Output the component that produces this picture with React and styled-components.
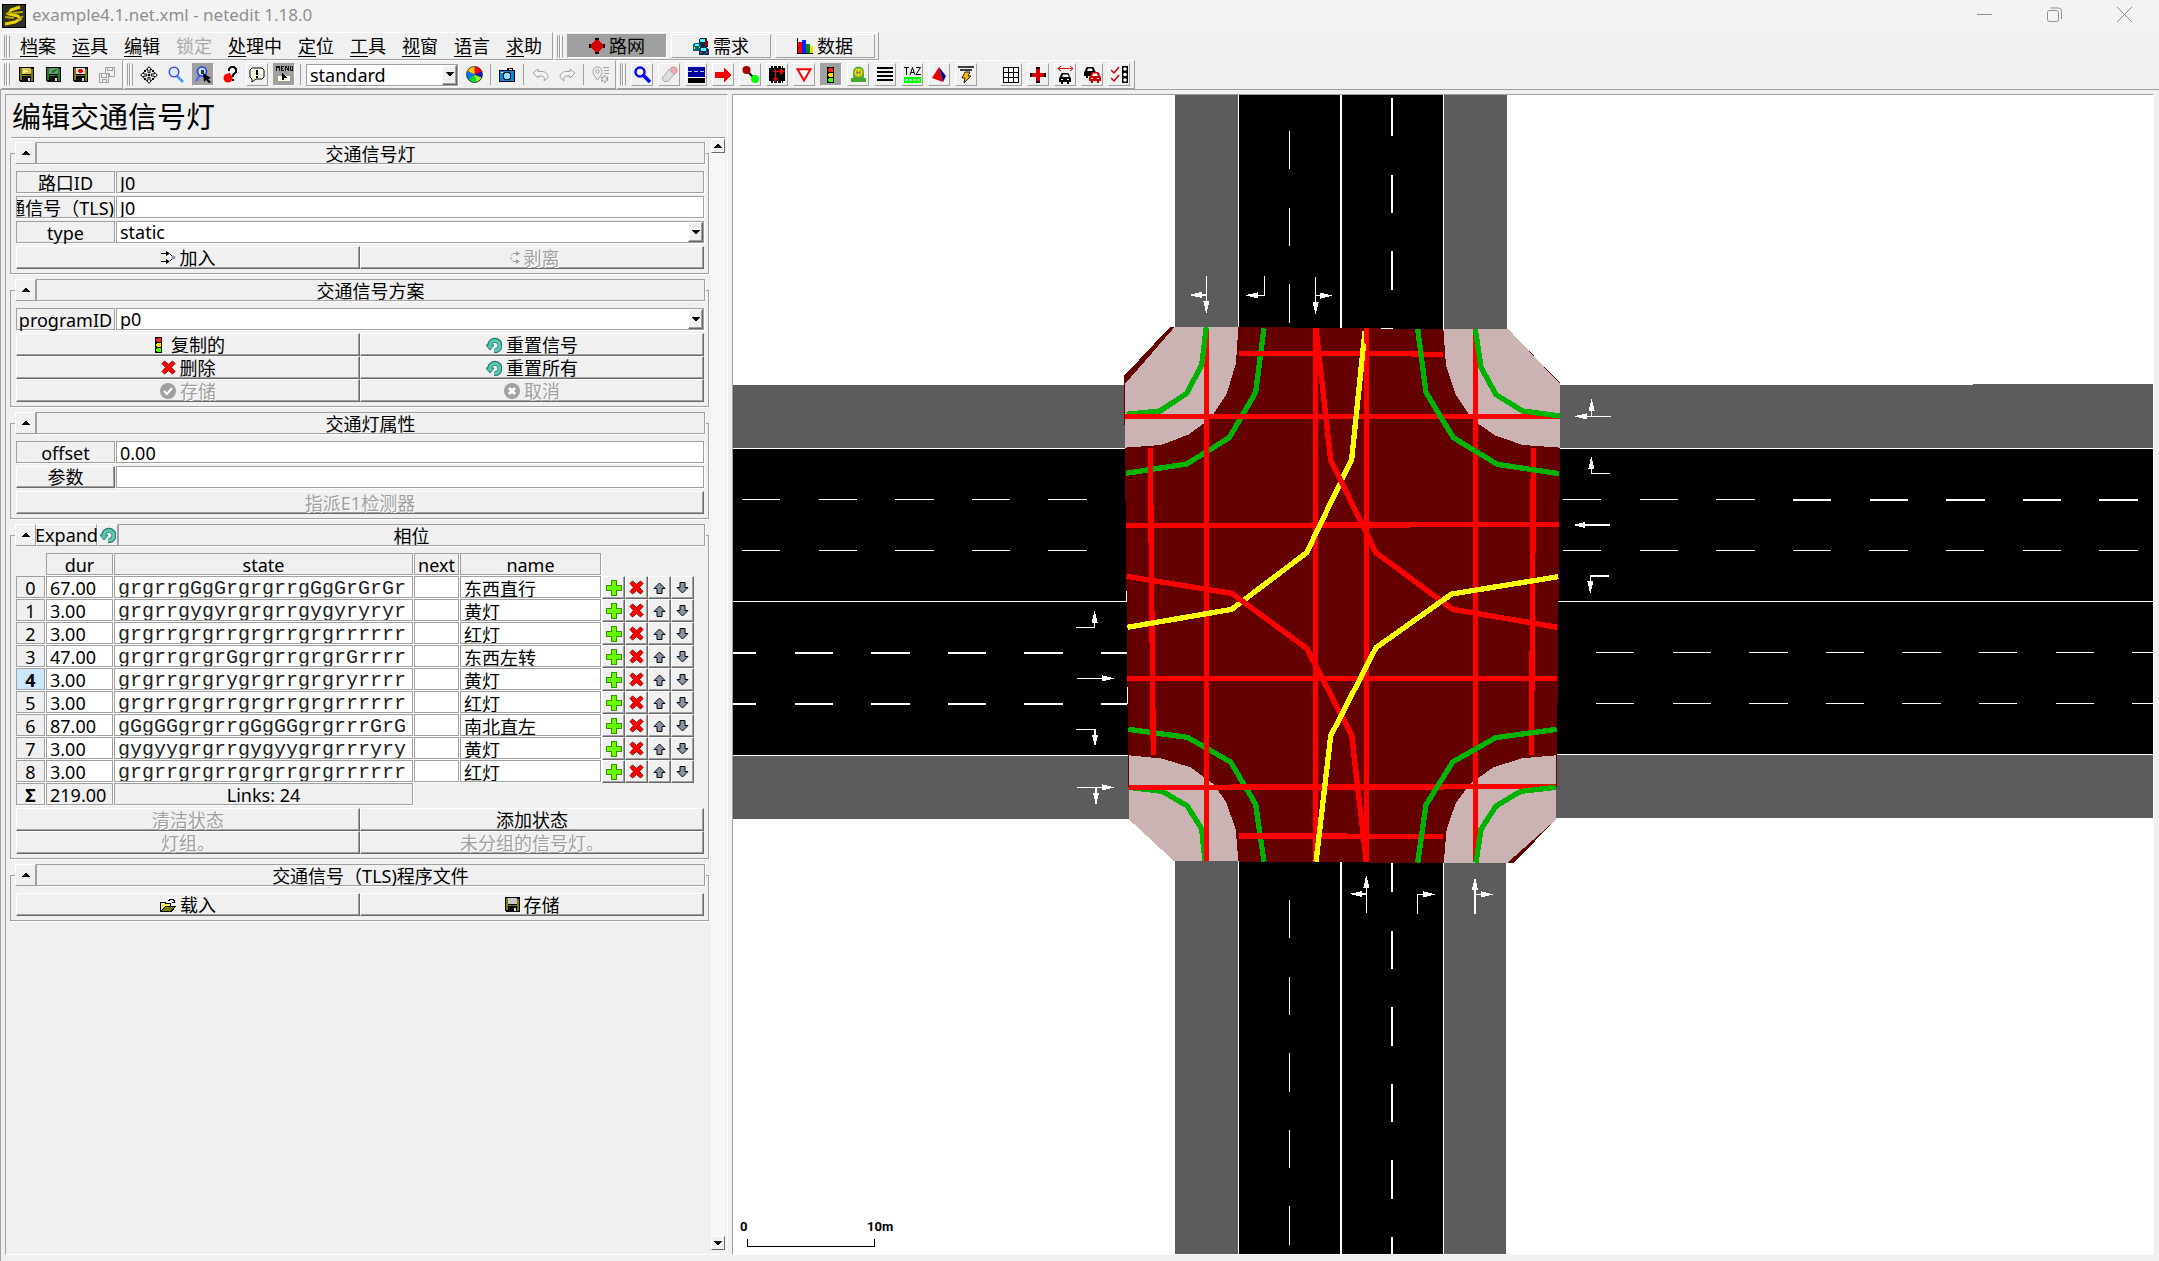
import React from "react";
import styled, { createGlobalStyle, css } from "styled-components";

const face = "#f0f0f0";
const shade = "#a0a0a0";
const dark = "#696969";

const Global = createGlobalStyle`
  *, *::before, *::after { box-sizing: border-box; }
  body { margin: 0; background: ${face}; }
  body, button, input, select {
    font-family: "Noto Sans", "Noto Sans CJK SC", sans-serif;
    font-size: 18px;
    color: #000;
  }
  button, input, select { margin: 0; padding: 0; border: 0; border-radius: 0; background: none; outline: none; }
`;

/* ---------- window frame ---------- */

const Window = styled.div`
  display: flex;
  flex-direction: column;
  height: 100vh;
  background: ${face};
  overflow: hidden;
`;

const TitleBar = styled.header`
  display: flex;
  align-items: center;
  flex: none;
  height: 32px;
  padding-left: 2px;
  gap: 6px;
  background: #f3f3f3;
`;

const Title = styled.h1`
  flex: 1;
  margin: 0;
  padding-bottom: 2px;
  font-size: 17px;
  line-height: 24px;
  font-weight: 400;
  color: #8e8e8e;
`;

const WindowButtons = styled.div`
  display: flex;
  align-self: flex-start;
`;

const WindowButton = styled.button`
  display: grid;
  place-items: center;
  width: 70px;
  height: 28px;
`;

const BarRow = styled.div`
  display: flex;
  flex: none;
  gap: 1px;
  padding-left: 1px;
  height: ${(p) => p.$height}px;
`;

const Bar = styled.div`
  display: flex;
  align-items: center;
  gap: ${(p) => p.$gap}px;
  padding: 0 ${(p) => p.$end}px 0 2px;
  border: 1px solid;
  border-color: #fff ${shade} ${shade} #fff;
`;

const Grip = styled.span`
  width: 6px;
  height: 23px;
  border: 1px solid;
  border-color: #fff ${shade};
  border-top-color: transparent;
  border-bottom-color: transparent;
  background: linear-gradient(90deg, ${face} 1px, ${shade} 1px, ${shade} 2px, #fff 2px, #fff 3px, ${face} 3px);
`;

const Menus = styled.nav`
  display: flex;
`;

const MenuItem = styled.button`
  padding: 0 8px;
  height: 26px;
  line-height: 26px;
  white-space: nowrap;
  color: ${(p) => (p.disabled ? "#a8a8a8" : "#000")};
  u {
    text-underline-offset: 3px;
    text-decoration-thickness: 1px;
    text-decoration-line: ${(p) => (p.disabled ? "none" : "underline")};
  }
`;

const raised = css`border-color: #fff ${shade} ${shade} #fff;`;
const pressed = css`border-color: ${shade} #fff #fff ${shade}; background: ${shade};`;

const ModeButton = styled.button`
  display: flex;
  align-items: center;
  justify-content: center;
  gap: 4px;
  width: 100px;
  height: 24px;
  line-height: 22px;
  border: 1px solid;
  ${(p) => (p.$on ? pressed : raised)}
`;

const Tool = styled.button`
  display: grid;
  place-items: center;
  width: 22px;
  height: 23px;
  border: 1px solid transparent;
  ${(p) => p.$look === "raised" && raised}
  ${(p) => p.$look === "pressed" && pressed}
`;

const Divider = styled.span`
  width: 1px;
  height: 21px;
  background: ${shade};
`;

const Spacer = styled.span`
  width: 13px;
`;

/* ---------- form parts ---------- */

const boxed = css`
  height: 22px;
  border: 1px solid ${shade};
  box-shadow: 1px 1px 0 #fff;
`;

const SelectBox = styled.div`
  display: grid;
  flex: ${(p) => (p.$width ? "none" : 1)};
  width: ${(p) => (p.$width ? p.$width + "px" : "auto")};
  ${boxed}
  background: #fff;
  select, span { grid-area: 1 / 1; }
  select {
    appearance: none;
    width: 100%;
    height: 20px;
    padding: 0 18px 0 3px;
    line-height: 20px;
  }
  span {
    justify-self: end;
    display: grid;
    place-items: center;
    width: 15px;
    height: 20px;
    background: ${face};
    border: 1px solid;
    border-color: #fff ${dark} ${dark} #fff;
    box-shadow: inset -1px -1px 0 ${shade};
    pointer-events: none;
  }
`;

const Line = styled.div`
  display: flex;
  gap: 1px;
  height: 25px;
`;

const Caption = styled.label`
  display: flex;
  flex: none;
  justify-content: ${(p) => (p.$clip ? "flex-end" : "center")};
  width: 99px;
  ${boxed}
  line-height: 22px;
  white-space: nowrap;
  overflow: ${(p) => (p.$clip ? "hidden" : "visible")};
`;

const Field = styled.input`
  flex: 1;
  min-width: 0;
  width: ${(p) => (p.$cell ? "calc(100% - 1px)" : "auto")};
  ${boxed}
  display: block;
  padding: 2px 3px 0;
  line-height: 20px;
  background: ${(p) => (p.readOnly ? face : "#fff")};
  ${(p) => p.$mono && css`
    font-family: "Liberation Mono", monospace;
    font-size: 20px;
    color: #222;
  `}
`;

const Push = styled.button`
  display: flex;
  align-items: center;
  justify-content: center;
  gap: 4px;
  flex: ${(p) => (p.$width ? "none" : "1 1 0")};
  width: ${(p) => (p.$width ? p.$width + "px" : "auto")};
  height: ${(p) => (p.$low ? 22 : 23)}px;
  line-height: 22px;
  border: 1px solid;
  border-color: #fff ${dark} ${dark} #fff;
  box-shadow: inset -1px -1px 0 ${shade};
  color: ${(p) => (p.disabled ? shade : "#000")};
  text-shadow: ${(p) => (p.disabled ? "1px 1px 0 #fff" : "none")};
`;

const PushRow = styled.div`
  display: flex;
`;

/* ---------- side panel ---------- */

const Workspace = styled.main`
  display: flex;
  flex: 1;
  min-height: 0;
  gap: 4px;
  padding: 4px 5px 6px 4px;
  border-top: 1px solid ${shade};
  border-left: 1px solid ${shade};
`;

const Panel = styled.section`
  display: flex;
  flex-direction: column;
  flex: none;
  width: 723px;
  border: 1px solid;
  border-color: ${shade} #fff #fff ${shade};
`;

const PanelTitle = styled.h2`
  margin: 0 2px 0 5px;
  height: 43px;
  padding: 2px 1px 0;
  border-bottom: 1px solid ${shade};
  box-shadow: 0 1px 0 #fff;
  font-size: 29px;
  line-height: 40px;
  font-weight: 400;
`;

const PanelBody = styled.div`
  display: flex;
  flex: 1;
  min-height: 0;
  padding: 1px 2px 4px 4px;
`;

const Groups = styled.div`
  display: flex;
  flex-direction: column;
  flex: 1;
  gap: 16px;
  padding: 14px 2px 0 0;
`;

const Scrollbar = styled.div`
  display: flex;
  flex-direction: column;
  justify-content: space-between;
  width: 14px;
  background: repeating-conic-gradient(#fff 0 25%, ${face} 0 50%) 0 0 / 2px 2px;
`;

const ScrollButton = styled.button`
  display: grid;
  place-items: center;
  width: 14px;
  height: 14px;
  background: ${face};
  border: 1px solid;
  border-color: #fff ${dark} ${dark} #fff;
`;

const GroupBox = styled.section`
  padding: 0 4px 4px 5px;
  border: 1px solid ${shade};
  box-shadow: 1px 1px 0 #fff;
`;

const GroupHead = styled.div`
  display: flex;
  height: 22px;
  margin: -12px -1px 7px;
  background: ${face};
`;

const HeadButton = styled.button`
  display: flex;
  align-items: center;
  justify-content: center;
  width: ${(p) => p.$width}px;
  height: 22px;
  line-height: 20px;
  border: 1px solid;
  border-color: #fff ${shade} ${shade} #fff;
`;

const GroupTitle = styled.h3`
  flex: 1;
  margin: 0;
  ${boxed}
  font-size: 18px;
  line-height: 22px;
  font-weight: 400;
  text-align: center;
`;

const Phases = styled.table`
  table-layout: fixed;
  width: 678px;
  margin-bottom: 2px;
  border-collapse: collapse;
  th, td { padding: 0; height: 23px; font-weight: 400; vertical-align: top; }
`;

const Col = styled.col`
  width: ${(p) => p.$w}px;
`;

const Cell = styled.div`
  width: calc(100% - 1px);
  ${boxed}
  line-height: 22px;
  text-align: center;
  background: ${(p) => (p.$current ? "#cce8ff" : face)};
  font-weight: ${(p) => (p.$strong ? 700 : 400)};
`;

/* ---------- network view ---------- */

const View = styled.section`
  flex: 1;
  min-width: 0;
  background: #fff;
  border: 1px solid;
  border-color: ${shade} #fff #fff ${shade};
  svg { display: block; width: 100%; height: 100%; }
`;

/* ---------- icons ---------- */

const Svg = ({ w = 16, h = 16, box, children, smooth }) => (
  <svg width={w} height={h} viewBox={box || `0 0 ${w} ${h}`} shapeRendering={smooth ? "auto" : "crispEdges"} aria-hidden="true" fill="none">
    {children}
  </svg>
);

const Tri = ({ up }) => (
  <Svg w={10} h={5}>
    <path d={up ? "M4 0h2v1h1v1h1v1h1v1H1V3h1V2h1V1h1z" : "M1 0h8v1H8v1H7v1H6v1H4V3H3V2H2V1H1z"} fill="#000" />
  </Svg>
);

const Floppy = ({ body = "#7b7b00", label = "#c8c8c8", mark }) => (
  <Svg w={15} h={15}>
    <path d="M0 0h15v15H1L0 14z" fill="#000" />
    <path d="M1 1h2v12H1zM12 2h2v12h-2zM3 8h9v1H3z" fill={body} />
    <rect x="3" y="1" width="9" height="6" fill={label} />
    {mark}
    <rect x="4" y="10" width="7" height="5" fill="#111" />
    <rect x="9" y="11" width="2" height="3" fill="#ddd" />
  </Svg>
);

const Light = () => (
  <Svg box="-4 0 16 16">
    <rect width="7" height="16" fill="#000" />
    <path d="M2 1h3l1 1v2L5 5H2L1 4V2z" fill="#f22" />
    <path d="M2 6h3l1 1v2l-1 1H2L1 9V7z" fill="#fd0" />
    <path d="M2 11h3l1 1v2l-1 1H2l-1-1v-2z" fill="#4f0" />
  </Svg>
);

const Reload = () => (
  <Svg smooth>
    <path d="M3.6 8.2a5.2 5.2 0 1 1 4.6 5.5" stroke="#1f7a6b" strokeWidth="5" />
    <path d="M0 8h8l-4 5z" fill="#5cc8b4" stroke="#1f7a6b" />
    <path d="M3.8 8.8a5 5 0 1 1 4.6 4.8" stroke="#5cc8b4" strokeWidth="3" />
  </Svg>
);

const Cross = () => (
  <Svg w={15} h={15} smooth>
    <path d="M3.5 1 7.5 4.6 11.5 1 14 3.5 10.4 7.5 14 11.5 11.5 14 7.5 10.4 3.5 14 1 11.5 4.6 7.5 1 3.5z" fill="#f00" stroke="#900" />
  </Svg>
);

const Plus = () => (
  <Svg w={16} h={16}>
    <path d="M5.5.5h5v5h5v5h-5v5h-5v-5h-5v-5h5z" fill="#6f0" stroke="#3b8f00" />
  </Svg>
);

const Arrow = ({ down }) => (
  <Svg w={13} h={12} smooth>
    <path d={down ? "M4 .5h5v5h3L6.5 11 1 5.500h3z" : "M4 11.500h5v-5h3L6.500 1 1 6.500h3z"} fill="#8b95a8" stroke="#000" />
  </Svg>
);

const Seal = ({ ok }) => (
  <Svg smooth>
    <circle cx="8" cy="8" r="8" fill={shade} />
    <path d={ok ? "M4 8l3 3 5-6" : "M5 5l6 6M11 5l-6 6"} stroke="#fff" strokeWidth={ok ? 2 : 3} />
  </Svg>
);

const Join = () => (
  <Svg w={15} h={13} smooth>
    <path d="M0 2.500h8M0 10.500h8M9 3l3 3M9 10l3-3" stroke="#000" />
    <path d="M5 0l4 2.500L5 5zM5 8l4 2.500L5 13z" fill="#000" />
    <circle cx="12.500" cy="6.500" r="2" fill="#8b95a8" />
  </Svg>
);

const Split = () => (
  <Svg w={15} h={13} box="-5 0 15 13" smooth>
    <path d="M5 2.500H3L1 4.500M5 10.500H3L1 8.500M1 6v2" stroke={shade} />
    <path d="M5 2.500h3M5 10.500h3" stroke={shade} />
    <path d="M6 0l4 2.500L6 5zM6 8l4 2.500L6 13z" fill={shade} />
  </Svg>
);

const Folder = () => (
  <Svg w={16} h={14}>
    <path d="M0 4h5l1 1h5v3h5l-4 6H0z" fill="#000" />
    <path d="M1 5h3l1 1h5v2H5l-4 5z" fill="#f6f060" />
    <path d="M5 9h9l-3 4H2z" fill="#7b7b00" />
    <path d="M8 2h1V1h4v1h1v2M12 4.500h3" stroke="#000" />
  </Svg>
);

const carPath = "M4 3h6l1 1 1 3 1 1v4h-2v2H9v-2H5v2H3v-2H1V8l1-1 1-3z";

const icons = {
  saveNet: <Floppy label="#d9c14a" mark={<path d="M5 3l5 1-6 2z" fill="#fff6a8" />} />,
  saveGreen: <Floppy body="#1d7a37" label="#6a9a6a" mark={<path d="M5 5l5-3 1 1-4 3z" fill="#2c6d2c" />} />,
  saveTls: <Floppy label="#ddd" mark={<path d="M6 2h3v1h1v2H9v1H6V5H5V3h1z" fill="#f00" />} />,
  saveAll: (
    <Svg>
      <path d="M6.500.500h9v9h-5v-3h-4zM8.500.500v3h5v-3M.500 6.500h9v9h-9zM2.500 6.500v4h5v-4M3.500 15.500v-3h4v3" stroke={shade} />
    </Svg>
  ),
  move: (
    <Svg w={18} h={18} smooth>
      <path d="M9 .700l2.800 3H10v3H8v-3H6.200zM9 17.300l2.800-3H10v-3H8v3H6.200zM.700 9l3-2.800V8h3v2h-3v1.800zM17.300 9l-3-2.800V8h-3v2h3v1.800z" fill="#fff" stroke="#000" />
      <path d="M4 4h2v2H4zM12 4h2v2h-2zM4 12h2v2H4zM12 12h2v2h-2zM8 8h2v2H8z" fill="#000" />
    </Svg>
  ),
  zoom: (
    <Svg w={16} h={17} smooth>
      <path d="M9 10l6 6" stroke="#3b9cf5" strokeWidth="2.500" />
      <circle cx="6" cy="6" r="4.700" fill="#dff1ff" stroke="#4a4ae0" strokeWidth="1.600" />
    </Svg>
  ),
  zoomCursor: (
    <Svg w={17} h={17} smooth>
      <path d="M5 9l-4 6" stroke="#3b6cf5" strokeWidth="2" />
      <circle cx="7" cy="5.500" r="4.500" fill="#bfe0ff" stroke="#2a3ae0" strokeWidth="1.600" />
      <path d="M6 4h3v4H6z" fill="#333" />
      <path d="M8 7l8 5-3 1 3 3-2 1-3-3-2 2z" fill="#000" />
    </Svg>
  ),
  help: (
    <Svg w={15} h={17} smooth>
      <path d="M6 5V3l2-2h3l2 2v3l-3 3v2M10 13v2" stroke="#000" strokeWidth="2" />
      <path d="M7 7L4 10" stroke="#000" />
      <circle cx="5" cy="12" r="4.500" fill="#f00" />
    </Svg>
  ),
  bubble: (
    <Svg smooth>
      <path d="M3 1h10l2 2v7l-2 2H7l-4 3v-3l-2-2V3z" fill="#ffffe8" stroke="#000" />
      <path d="M8 3v5M8 9v2" stroke="#000" strokeWidth="2" />
    </Svg>
  ),
  menu: (
    <Svg w={18} h={18}>
      <path d="M1 5V0h1v1h1V0h1v5M6 0h3M6 2.500h2M6 4.500h3M6.500 0v5M10.500 5V0l3 4V0M15.500 0v4.500h2V0" stroke="#111" />
      <path d="M3 10h12v5H3z" fill="#ffffe0" />
      <path d="M7 7l5 5H9v2H7z" fill="#000" />
    </Svg>
  ),
  wheel: (
    <Svg w={17} h={17} smooth>
      <circle cx="8.500" cy="8.500" r="8" fill="#f00" />
      <path d="M8.500 8.500V.500A8 8 0 0 0 1.500 5z" fill="#fc0" />
      <path d="M8.500 8.500L1.500 5a8 8 0 0 0 1 8.500z" fill="#07f" />
      <path d="M8.500 8.500l-6 5a8 8 0 0 0 8 2.700z" fill="#0d3" />
      <path d="M8.500 8.500l2 7.700a8 8 0 0 0 5.200-4.700z" fill="#8f2" />
      <path d="M8.500 8.500l7.200 3a8 8 0 0 0 0-6z" fill="#02c" />
      <circle cx="8.500" cy="8.500" r="8" stroke="#333" strokeWidth=".800" />
    </Svg>
  ),
  camera: (
    <Svg w={16} h={14}>
      <path d="M0 2h8V0h6v2h2v12H0z" fill="#000" />
      <path d="M1 3h14v10H1z" fill="#0a84d8" />
      <circle cx="8" cy="8" r="4.500" fill="#023" />
      <circle cx="8" cy="8" r="3" fill="#8fdcff" />
      <path d="M10 1h3v1h-3zM2 4h2v1H2z" fill="#fff" />
    </Svg>
  ),
  undo: (
    <Svg w={17} h={14} smooth>
      <path d="M1 5l5-4v2.500h4c4 0 6 3 6 6L12 13c1-3 0-5-3-5H6v2z" fill="#f4f4f4" stroke={shade} />
    </Svg>
  ),
  redo: (
    <Svg w={17} h={14} smooth>
      <path d="M16 5l-5-4v2.500H7c-4 0-6 3-6 6L5 13c-1-3 0-5 3-5h3v2z" fill="#f4f4f4" stroke={shade} />
    </Svg>
  ),
  locate: (
    <Svg w={17} h={17} smooth>
      <path d="M5.500 14C2 9 1 8 1 5.500a4.500 4.500 0 0 1 9 0C10 8 9 9 5.500 14z" stroke={shade} />
      <circle cx="5.500" cy="5.500" r="1.700" stroke={shade} />
      <path d="M11 1.500h6M12 4.500h5M12 7.500h5" stroke={shade} />
      <circle cx="12.500" cy="13" r="2.800" stroke={shade} strokeWidth="2" strokeDasharray="2 1" />
    </Svg>
  ),
  inspect: (
    <Svg w={17} h={17} smooth>
      <circle cx="6" cy="6" r="4.500" fill="#fff" stroke="#00f" strokeWidth="2.500" />
      <path d="M9.500 9.500L16 16" stroke="#00f" strokeWidth="3.500" />
    </Svg>
  ),
  erase: (
    <Svg w={17} h={17} smooth>
      <path d="M9 3l2-2h3l2 2v3l-3 3z" fill="#f5a8b4" stroke="#c99" />
      <path d="M8 3.500l5 5-6 7H3l-2-3z" fill="#ddd" stroke="#aaa" />
    </Svg>
  ),
  edge: (
    <Svg w={17} h={16}>
      <rect width="17" height="10" fill="#0000a0" />
      <path d="M0 4.500h17" stroke="#bbe" strokeDasharray="4 2" />
      <path d="M0 10h17v6H0z" fill="#000" />
      <path d="M0 10.500h17" stroke="#fff" />
    </Svg>
  ),
  go: <Svg w={17} h={14}><path d="M0 4h9V0l7 7-7 7v-4H0z" fill="#f00" /></Svg>,
  connect: (
    <Svg w={17} h={17} smooth>
      <path d="M4 4l9 9" stroke="#000" strokeWidth="2" />
      <circle cx="4.500" cy="4" r="4" fill="#a00000" />
      <circle cx="13" cy="13" r="4" fill="#0f0" />
    </Svg>
  ),
  prohibit: (
    <Svg w={16} h={17}>
      <rect width="16" height="17" fill="#000" />
      <path d="M0 0h2v2H0zM14 0h2v2h-2zM0 15h2v2H0zM14 15h2v2h-2z" fill="#fff" />
      <path d="M4 0v2M8 0v2M12 0v2M4 15v2M8 15v2M12 15v2" stroke="#fff" />
      <path d="M4 5.500h9M6.500 3v12M11.500 3v6" stroke="#f00" />
      <path d="M12 3l4 2.500-4 2.500zM4 12h5l-2.500 4z" fill="#f00" />
    </Svg>
  ),
  crossing: <Svg w={16} h={14} smooth><path d="M1.500 1.200h13L8 12.500z" fill="#fff" stroke="#f00" strokeWidth="2" /></Svg>,
  light: <Light />,
  stop: (
    <Svg w={17} h={17} smooth>
      <path d="M1 12h15v4H1z" fill="#4aa52e" />
      <path d="M3 12V6a5.500 5.500 0 0 1 11 0v6z" fill="#5aad36" />
      <circle cx="8.500" cy="6.500" r="4" fill="#f5d800" />
      <path d="M7 4.500v4M10 4.500v4M7 6.500h3" stroke="#777" />
    </Svg>
  ),
  lines: <Svg><path d="M0 1h16M0 5h16M0 9h16M0 13h16" stroke="#000" strokeWidth="2" /></Svg>,
  taz: (
    <Svg w={17} h={16} smooth>
      <path d="M0 .500h5M2.500 0v8M6 8L8.500.500 11 8M7 5.500h3M12 .500h4.500L12 7.500h5" stroke="#000" />
      <path d="M0 10h17v6H0z" fill="#0f0" />
      <path d="M1 13h15" stroke="#fff" strokeDasharray="3 1" />
    </Svg>
  ),
  polygon: (
    <Svg w={16} h={16} smooth>
      <path d="M8 0l4 15L1 11z" fill="#e80000" />
      <path d="M8 0l7 9-3 6z" fill="#000080" />
    </Svg>
  ),
  wire: (
    <Svg w={16} h={17} smooth>
      <path d="M0 1h16M2 4h12" stroke="#000" strokeWidth="1.500" />
      <path d="M7 6h5l-2 4h3l-7 7 1-5H4z" fill="#fb0" stroke="#222" />
    </Svg>
  ),
  grid: (
    <Svg w={16} h={16}>
      <path d="M.500.500h15v15H.500zM5.500 0v16M10.500 0v16M0 5.500h16M0 10.500h16" fill="#fff" stroke="#000" />
    </Svg>
  ),
  junction: (
    <Svg w={16} h={16}>
      <path d="M6 0h4v4H6zM6 12h4v4H6zM0 6h4v4H0zM12 6h4v4h-4z" fill="#000" />
      <path d="M6 2h4v1h1v1h1v1h1v1h1v4h-1v1h-1v1h-1v1h-1v1H6v-1H5v-1H4v-1H3v-1H2V6h1V5h1V4h1V3h1z" fill="#d40000" />
    </Svg>
  ),
  cross: (
    <Svg w={16} h={16}>
      <path d="M6 0h4v3H6zM6 13h4v3H6zM0 6h3v4H0zM13 6h3v4h-3z" fill="#000" />
      <path d="M6 2h4v4h4v4h-4v4H6v-4H2V6h4z" fill="#d40000" />
    </Svg>
  ),
  carSpread: (
    <Svg w={17} h={18} smooth>
      <path d="M1 2.500h15M4 0L1 2.500 4 5M13 0l3 2.500L13 5" stroke="#c00" />
      <g transform="translate(1 4)"><path d={carPath} fill="#000" /><path d="M5 4.500h5l.700 2.500H4.200zM3 9h2v1H3zM9 9h2v1H9z" fill="#fff" /></g>
    </Svg>
  ),
  cars: (
    <Svg w={17} h={17} smooth>
      <g transform="translate(-1 -2)"><path d={carPath} fill="#000" /><path d="M5 4.500h4l.700 2.500H4.200z" fill="#fff" /></g>
      <g transform="translate(4 3)"><path d={carPath} fill="#d00000" /><path d="M5 4.500h4l.700 2.500H4.200zM3 9h2v1H3zM9 9h2v1H9z" fill="#fff" /></g>
    </Svg>
  ),
  check: (
    <Svg w={17} h={17} smooth>
      <path d="M0 4l3 3 5-6M0 12l3 3 5-6" stroke="#d00000" strokeWidth="1.500" />
      <rect x="11" width="6" height="17" fill="#000" />
      <circle cx="14" cy="3" r="1.800" fill="#fff" /><circle cx="14" cy="8.500" r="1.800" fill="#fff" /><circle cx="14" cy="14" r="1.800" fill="#fff" />
    </Svg>
  ),
};

const DemandIcon = () => (
  <Svg w={16} h={17}>
    <path d="M6 1l1-1h6l1 1 1 3v5h-3v1H6z" fill="#024" />
    <path d="M7 1h5v3H7z" fill="#3ff" />
    <path d="M12 1h2l1 3v4h-3z" fill="#900" />
    <path d="M1 5h6l1 3v5H0V8z" fill="#067" />
    <path d="M2 6h4v2H2z" fill="#4ff" />
    <path d="M1 9h1v2H1zM6 9h1v2H6z" fill="#ff0" />
    <path d="M7 9h7l2 3v5H6v-5z" fill="#036" />
    <path d="M8 10h5v3H8z" fill="#4ff" />
    <path d="M7 14h2v1H7zM13 14h2v1h-2z" fill="#f33" />
  </Svg>
);

const DataIcon = () => (
  <Svg w={16} h={16}>
    <path d="M.500 0v15.500H16" stroke="#000" />
    <path d="M1 4h4v11H1z" fill="#f00" />
    <path d="M5 2h4v13H5z" fill="#02f" />
    <path d="M9 6h4v9H9z" fill="#0a8a1a" />
    <path d="M13 8h3v7h-3z" fill="#fd0" />
  </Svg>
);

const Logo = () => (
  <Svg w={24} h={24} smooth>
    <rect width="24" height="24" fill="#000" />
    <rect x="1" y="1" width="22" height="22" fill="#2e2e24" />
    <path d="M18 3L9 6l-2 4 9 2 2 3-5 3-10 2" stroke="#e8d400" strokeWidth="3" />
    <path d="M3 13l9 1M21 8l-10 1M16 16l5-4M4 10l6-2" stroke="#b8a800" strokeWidth="2" />
  </Svg>
);

/* ---------- content ---------- */

const menus = ["档案", "运具", "编辑", "锁定", "处理中", "定位", "工具", "视窗", "语言", "求助"];

const fileTools = ["saveNet", "saveGreen", "saveTls", "saveAll"];
const viewTools = [["move"], ["zoom"], ["zoomCursor", "pressed"], ["help"], ["bubble", "raised"], ["menu", "pressed"]];
const modeTools = ["inspect", "erase", "edge", "go", "connect", "prohibit", "crossing", "light", "stop", "lines", "taz", "polygon", "wire"];
const optionTools = ["grid", "cross", "carSpread", "cars", "check"];

const red24 = "grgrrgrgrrgrgrrgrgrrrrrr";
const phases = [
  ["67.00", "grgrrgGgGrgrgrrgGgGrGrGr", "东西直行"],
  ["3.00", "grgrrgygyrgrgrrgygyryryr", "黄灯"],
  ["3.00", red24, "红灯"],
  ["47.00", "grgrrgrgrGgrgrrgrgrGrrrr", "东西左转"],
  ["3.00", "grgrrgrgrygrgrrgrgryrrrr", "黄灯"],
  ["3.00", red24, "红灯"],
  ["87.00", "gGgGGgrgrrgGgGGgrgrrrGrG", "南北直左"],
  ["3.00", "gygyygrgrrgygyygrgrrryry", "黄灯"],
  ["3.00", red24, "红灯"],
];

const Combo = ({ id, value, width, label }) => (
  <SelectBox $width={width}>
    <select id={id} aria-label={label} defaultValue={value}>
      <option>{value}</option>
    </select>
    <span><Tri /></span>
  </SelectBox>
);

const Group = ({ title, extra, children }) => (
  <GroupBox>
    <GroupHead>
      <HeadButton $width={21} aria-label="collapse"><Tri up /></HeadButton>
      {extra}
      <GroupTitle>{title}</GroupTitle>
    </GroupHead>
    {children}
  </GroupBox>
);

const ToolButton = ({ name, look }) => (
  <Tool $look={look} aria-label={name}>{icons[name]}</Tool>
);

/* Dashes of one lane marking, starting at `from` and repeating along the road. */
const dashes = (from, to, at, vertical, width, min = -Infinity) => {
  const out = [];
  for (let s = from; s < to; s += 76.6) {
    const a = Math.max(s, min);
    const b = Math.min(s + 38.4, to);
    out.push(
      <rect
        key={`${at}-${s}`}
        x={vertical ? at : a}
        y={vertical ? a : at}
        width={vertical ? width : b - a}
        height={vertical ? b - a : width}
      />
    );
  }
  return out;
};

const head = (x, y, dir) => {
  const l = 38;
  const h = 9;
  return {
    up: `M${x} ${y}l${h} ${l}h${-2 * h}z`,
    down: `M${x} ${y}l${h} ${-l}h${-2 * h}z`,
    left: `M${x} ${y}l${l} ${-h}v${2 * h}z`,
    right: `M${x} ${y}l${-l} ${-h}v${2 * h}z`,
  }[dir];
};

const arrowLines =
  "M319 48V130M319 105H290M493 48V106H460M647 50V130M647 107H680" +
  "M799 1958V1860M799 1902H770M952 1962V1903H985M1125 1962V1870M1125 1903H1160" +
  "M1533 469H1440M1475 469V440M1530 640H1474V610M1530 795H1440M1527 948H1471V980" +
  "M-72 1102H-16V1070M-68 1255H20M-71 1408H-15V1440M-68 1582H20M-12 1582V1610";

const arrowHeads = [
  [319, 162, "down"], [267, 105, "left"], [435, 106, "left"], [647, 165, "down"], [699, 107, "right"],
  [799, 1845, "up"], [748, 1902, "left"], [1008, 1903, "right"], [1125, 1851, "up"], [1182, 1903, "right"],
  [1422, 469, "left"], [1475, 414, "up"], [1474, 588, "up"], [1418, 795, "left"], [1471, 1002, "down"],
  [-16, 1050, "up"], [45, 1255, "right"], [-15, 1462, "down"], [45, 1582, "right"], [-12, 1637, "down"],
].map((a) => head(...a)).join("");

const Network = () => (
  <svg viewBox="733 95 1421 1159" preserveAspectRatio="xMinYMin slice" shapeRendering="crispEdges" role="img" aria-label="J0">
    <g fill="#5c5c5c">
      <rect x="1175" y="95" width="63" height="233" />
      <rect x="1444" y="95" width="63" height="235" />
      <rect x="1175" y="861" width="63" height="400" />
      <rect x="1444" y="863" width="62" height="400" />
      <rect x="733" y="385" width="392" height="63" />
      <rect x="733" y="756" width="396" height="63" />
      <path d="M1560 385H1973V384H2154V448H1560zM1556 755H2154V818H1556z" />
    </g>
    <g fill="#000">
      <rect x="1239" y="95" width="204" height="235" />
      <rect x="1239" y="861" width="204" height="400" />
      <rect x="733" y="449" width="396" height="306" />
      <rect x="1556" y="449" width="598" height="306" />
    </g>
    <g fill="#fff">
      <rect x="1238" y="95" width="1" height="233" />
      <rect x="1443" y="95" width="1" height="234" />
      <rect x="1340" y="95" width="2" height="234" />
      <rect x="1238" y="861" width="1" height="400" />
      <rect x="1443" y="863" width="1" height="400" />
      <rect x="1340" y="862" width="2" height="400" />
      <rect x="733" y="448" width="392" height="1" />
      <rect x="733" y="601" width="394" height="1" />
      <rect x="733" y="755" width="395" height="1" />
      <rect x="1560" y="448" width="594" height="1" />
      <rect x="1558" y="601" width="596" height="1" />
      <rect x="1557" y="754" width="597" height="1" />
      {dashes(131, 327, 1289, true, 1)}
      {dashes(98, 327, 1391, true, 2)}
      {dashes(900, 1261, 1289, true, 1)}
      {dashes(854, 1261, 1391, true, 2, 862)}
      {dashes(742, 1100, 499, false, 1)}
      {dashes(742, 1100, 550, false, 1)}
      {dashes(718, 1127, 652, false, 2, 733)}
      {dashes(718, 1127, 703, false, 2, 733)}
      {dashes(1563, 1780, 499, false, 1)}
      {dashes(1793, 2154, 499, false, 2)}
      {dashes(1563, 2154, 550, false, 1)}
      {dashes(1596, 2154, 652, false, 1)}
      {dashes(1596, 2154, 703, false, 1)}
    </g>
    <path
      d="M1170 327H1238L1443 329 1509 330 1560 383V448L1557 755 1556 819 1514 863H1433L1174 861 1129 819 1128 755 1125 448 1124 400V376z"
      fill="#640000"
    />
    <rect x="1126" y="591" width="1" height="11" fill="#fff" />
    <rect x="1127" y="687" width="1" height="17" fill="#fff" />
    <rect x="1381" y="328" width="12" height="1" fill="#fff" />
    {/* Junction detail is drawn at three units to the pixel. */}
    <g transform="translate(1100 260) scale(0.333333)">
      <g fill="#ccb3b3">
        <path d="M223 202H415L408 310 380 402 340 462 312 490 265 524 183 555 75 563V372z" />
        <path d="M1225 207H1030L1038 315 1068 405 1105 460 1135 492 1187 527 1268 555 1380 563V372z" />
        <path d="M87 1486L187 1496 272 1522 340 1572 378 1625 407 1708 415 1803H222L87 1678z" />
        <path d="M1367 1486L1265 1495 1180 1522 1110 1572 1067 1630 1040 1708 1031 1810H1220L1367 1680z" />
      </g>
      <g fill="none" strokeWidth="16" strokeLinejoin="round">
        <g stroke="#00b300">
          <path d="M492 205L467 397 388 533 260 612 78 640" />
          <path d="M85 1408L262 1432 392 1506 467 1633 492 1805" />
          <path d="M87 1582L187 1594 262 1638 305 1707 315 1803" />
        </g>
        <g stroke="#f00">
          <path d="M319 205V1803M646 205V1805M799 205V1805M1126 207V1803" />
          <path d="M151 565L154 900 160 1485M1300 565L1298 1000 1294 1485" />
          <path d="M75 469H1380M78 796H492L1377 793M82 1255H1370M87 1582L1367 1580M417 280H875L1029 284M417 1728L1029 1729" />
        </g>
        <g stroke="#00b300">
          <path d="M319 202L305 315 260 400 180 453 80 463" />
          <path d="M1126 208L1143 322 1188 404 1268 453 1380 468" />
          <path d="M953 207L978 397 1060 533 1192 613 1377 641" />
          <path d="M1367 1582L1262 1594 1188 1638 1143 1708 1128 1808" />
          <path d="M1370 1408L1187 1433 1058 1506 978 1635 953 1808" />
        </g>
        <path d="M75 469H700" stroke="#f00" />
        <path d="M82 1102L395 1048 620 878 755 598 795 215" stroke="#ff0" />
        <path d="M799 1805L755 1425 620 1165 395 1000 80 949M648 205L692 600 828 878 1058 1048 1372 1102" stroke="#f00" />
        <path d="M799 205V500" stroke="#f00" />
        <path d="M791 250L760 550" stroke="#ff0" />
        <path d="M1375 950L1055 1002 828 1163 692 1428 648 1805" stroke="#ff0" />
      </g>
      <path d={arrowLines} fill="none" stroke="#fff" strokeWidth="4" />
      <path d={arrowHeads} fill="#fff" />
    </g>
    <path d="M747.500 1239V1246.500H874.500V1239" fill="none" stroke="#000" />
    <g fontFamily="Roboto, sans-serif" fontSize="13" fontWeight="700" fill="#000">
      <text x="740" y="1231">0</text>
      <text x="867" y="1231">10m</text>
    </g>
  </svg>
);

export default function App() {
  return (
    <Window>
      <Global />
      <TitleBar>
        <Logo />
        <Title>example4.1.net.xml - netedit 1.18.0</Title>
        <WindowButtons>
          <WindowButton aria-label="minimize">
            <Svg w={15} h={15}><path d="M0 7.500h15" stroke="#8e8e8e" /></Svg>
          </WindowButton>
          <WindowButton aria-label="restore">
            <Svg w={15} h={15} smooth>
              <rect x=".500" y="3.500" width="11" height="11" rx="2" stroke="#8e8e8e" />
              <path d="M3.500 1h8a3 3 0 0 1 3 3v8" stroke="#8e8e8e" />
            </Svg>
          </WindowButton>
          <WindowButton aria-label="close">
            <Svg w={15} h={15} smooth><path d="M0 0l15 15M15 0L0 15" stroke="#8e8e8e" /></Svg>
          </WindowButton>
        </WindowButtons>
      </TitleBar>

      <BarRow $height={28}>
        <Bar $gap={2} $end={2}>
          <Grip />
          <Menus>
            {menus.map((m) => (
              <MenuItem key={m} disabled={m === "锁定"}><u>{m[0]}</u>{m.slice(1)}</MenuItem>
            ))}
          </Menus>
        </Bar>
        <Bar $gap={4} $end={3}>
          <Grip />
          <ModeButton $on>{icons.junction}路网</ModeButton>
          <ModeButton><DemandIcon />需求</ModeButton>
          <ModeButton><DataIcon />数据</ModeButton>
        </Bar>
      </BarRow>

      <BarRow $height={29}>
        <Bar $gap={5} $end={4}>
          <Grip />
          {fileTools.map((n) => <ToolButton key={n} name={n} />)}
        </Bar>
        <Bar $gap={5} $end={4}>
          <Grip />
          {viewTools.map(([n, look]) => <ToolButton key={n} name={n} look={look} />)}
          <Divider />
          <Combo label="view scheme" value="standard" width={152} />
          <ToolButton name="wheel" />
          <Divider />
          <ToolButton name="camera" />
          <Divider />
          <ToolButton name="undo" />
          <ToolButton name="redo" />
          <Divider />
          <ToolButton name="locate" />
        </Bar>
        <Bar $gap={5} $end={4}>
          <Grip />
          {modeTools.map((n) => <ToolButton key={n} name={n} look={n === "light" ? "pressed" : "raised"} />)}
          <Spacer />
          {optionTools.map((n) => <ToolButton key={n} name={n} look="raised" />)}
        </Bar>
      </BarRow>

      <Workspace>
        <Panel>
          <PanelTitle>编辑交通信号灯</PanelTitle>
          <PanelBody>
            <Groups>
              <Group title="交通信号灯">
                <Line><Caption htmlFor="junction">路口ID</Caption><Field id="junction" defaultValue="J0" readOnly /></Line>
                <Line><Caption htmlFor="tls" $clip>交通信号（TLS)</Caption><Field id="tls" defaultValue="J0" /></Line>
                <Line><Caption htmlFor="type">type</Caption><Combo id="type" value="static" /></Line>
                <PushRow>
                  <Push><Join />加入</Push>
                  <Push disabled><Split />剥离</Push>
                </PushRow>
              </Group>

              <Group title="交通信号方案">
                <Line><Caption htmlFor="program">programID</Caption><Combo id="program" value="p0" /></Line>
                <PushRow>
                  <Push><Light />复制的</Push>
                  <Push><Reload />重置信号</Push>
                </PushRow>
                <PushRow>
                  <Push><Cross />删除</Push>
                  <Push><Reload />重置所有</Push>
                </PushRow>
                <PushRow>
                  <Push disabled><Seal ok />存储</Push>
                  <Push disabled><Seal />取消</Push>
                </PushRow>
              </Group>

              <Group title="交通灯属性">
                <Line><Caption htmlFor="offset">offset</Caption><Field id="offset" defaultValue="0.00" /></Line>
                <Line><Push $width={99} $low>参数</Push><Field aria-label="参数" defaultValue="" /></Line>
                <PushRow><Push disabled>指派E1检测器</Push></PushRow>
              </Group>

              <Group
                title="相位"
                extra={
                  <>
                    <HeadButton $width={61}>Expand</HeadButton>
                    <HeadButton $width={21} aria-label="reset"><Reload /></HeadButton>
                  </>
                }
              >
                <Phases>
                  <colgroup>
                    {[30, 68, 300, 46, 142, 92].map((w) => <Col key={w} $w={w} />)}
                  </colgroup>
                  <thead>
                    <tr>
                      <td />
                      {["dur", "state", "next", "name"].map((h) => <th key={h} scope="col"><Cell>{h}</Cell></th>)}
                      <td />
                    </tr>
                  </thead>
                  <tbody>
                    {phases.map(([dur, state, name], i) => (
                      <tr key={i}>
                        <th scope="row"><Cell $current={i === 4} $strong={i === 4}>{i}</Cell></th>
                        <td><Field $cell aria-label={`dur ${i}`} defaultValue={dur} /></td>
                        <td><Field $cell $mono aria-label={`state ${i}`} defaultValue={state} /></td>
                        <td><Field $cell aria-label={`next ${i}`} defaultValue="" /></td>
                        <td><Field $cell aria-label={`name ${i}`} defaultValue={name} /></td>
                        <td>
                          <PushRow>
                            <Push $width={23} aria-label="add"><Plus /></Push>
                            <Push $width={23} aria-label="delete"><Cross /></Push>
                            <Push $width={23} aria-label="up"><Arrow /></Push>
                            <Push $width={23} aria-label="down"><Arrow down /></Push>
                          </PushRow>
                        </td>
                      </tr>
                    ))}
                    <tr>
                      <th scope="row"><Cell $strong>Σ</Cell></th>
                      <td><Field $cell readOnly aria-label="total" defaultValue="219.00" /></td>
                      <td><Cell>Links: 24</Cell></td>
                      <td /><td /><td />
                    </tr>
                  </tbody>
                </Phases>
                <PushRow>
                  <Push disabled>清洁状态</Push>
                  <Push>添加状态</Push>
                </PushRow>
                <PushRow>
                  <Push disabled>灯组。</Push>
                  <Push disabled>未分组的信号灯。</Push>
                </PushRow>
              </Group>

              <Group title="交通信号（TLS)程序文件">
                <PushRow>
                  <Push><Folder />载入</Push>
                  <Push><Floppy />存储</Push>
                </PushRow>
              </Group>
            </Groups>
            <Scrollbar>
              <ScrollButton aria-label="scroll up"><Tri up /></ScrollButton>
              <ScrollButton aria-label="scroll down"><Tri /></ScrollButton>
            </Scrollbar>
          </PanelBody>
        </Panel>
        <View><Network /></View>
      </Workspace>
    </Window>
  );
}
